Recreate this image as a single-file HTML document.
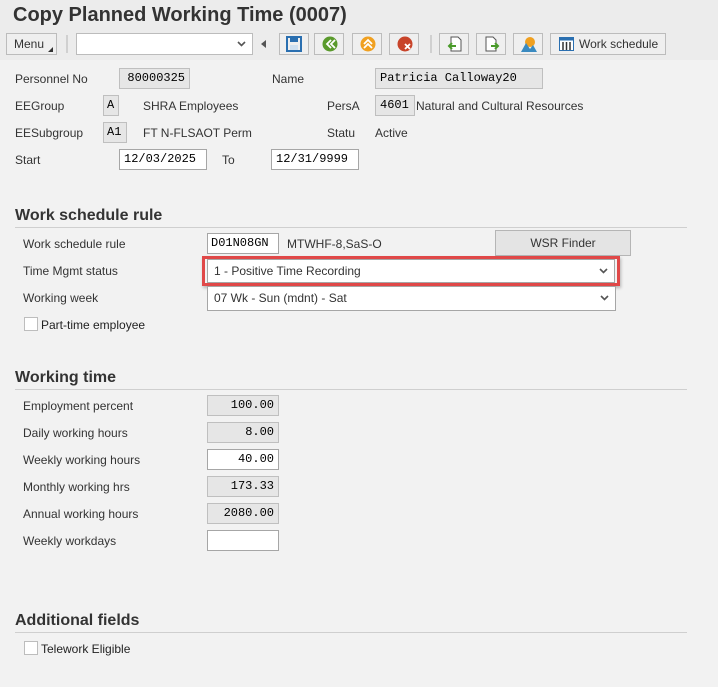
<!DOCTYPE html>
<html><head><style>
*{margin:0;padding:0;box-sizing:border-box}
body{width:718px;height:687px;background:#f2f2f2;font-family:"Liberation Sans",Arial,sans-serif;font-size:12px;color:#333;position:relative;overflow:hidden}
.a{position:absolute}
.t{position:absolute;font-size:12px;color:#333;line-height:14px}
.box{position:absolute;border:1px solid #bfbfbf;background:#e6e6e6;font-family:"Liberation Mono",monospace;font-size:12px;line-height:19px;padding:0 4px;color:#000}
.w{background:#fff;border-color:#a6a6a6}
.r{text-align:right}
.btn{position:absolute;top:33px;height:22px;border:1px solid #bcbcbc;background:#efefef}
.h{position:absolute;left:15px;font-size:16px;font-weight:bold;color:#333}
.line{position:absolute;left:15px;width:672px;height:1px;background:#cfcfcf}
.cb{position:absolute;width:14px;height:14px;border:1px solid #bdbdbd;background:#fff}
</style></head><body>
<div class="a" style="left:0;top:0;width:718px;height:60px;background:#ececec"></div>
<div class="a" style="left:13px;top:4px;font-size:20px;font-weight:bold;color:#333">Copy Planned Working Time (0007)</div>
<div class="btn" style="left:6px;width:51px;font-size:12px;line-height:20px;padding-left:7px">Menu<span style="position:absolute;right:3px;bottom:2px;width:0;height:0;border-left:5px solid transparent;border-bottom:5px solid #333"></span></div>
<div class="a" style="left:66px;top:35px;width:2px;height:18px;background:#d0d0d0"></div>
<div class="a" style="left:76px;top:33px;width:177px;height:22px;background:#fff;border:1px solid #bcbcbc"><svg class="a" style="right:6px;top:7px" width="9" height="6"><path d="M1 1L4.5 4.5L8 1" stroke="#555" stroke-width="1.6" fill="none"/></svg></div>
<svg class="a" style="left:261px;top:40px" width="6" height="8"><path d="M5 0L0 4L5 8Z" fill="#555"/></svg>
<div class="btn" style="left:279px;width:30px"><svg class="a" style="left:6px;top:2px" width="16" height="16"><rect x="1" y="1" width="14" height="14" fill="none" stroke="#2a6fb0" stroke-width="2"/><rect x="4" y="1" width="8" height="5" fill="#2a6fb0"/><rect x="4" y="9" width="8" height="5" fill="#cfe0f0"/></svg></div>
<div class="btn" style="left:314px;width:30px"><svg class="a" style="left:7px;top:2px" width="16" height="16"><circle cx="8" cy="8" r="7.5" fill="#5a9a2c"/><path d="M9 4L5 8L9 12M13 4L9 8L13 12" stroke="#fff" stroke-width="1.8" fill="none"/></svg></div>
<div class="btn" style="left:352px;width:30px"><svg class="a" style="left:7px;top:2px" width="16" height="16"><circle cx="8" cy="8" r="7.5" fill="#f0a020"/><path d="M4 8L8 4L12 8M4 12L8 8L12 12" stroke="#fff" stroke-width="1.8" fill="none"/></svg></div>
<div class="btn" style="left:389px;width:30px"><svg class="a" style="left:7px;top:2px" width="16" height="16"><circle cx="8" cy="8" r="7.5" fill="#c8442a"/><path d="M8 8L13 13M13 8L8 13" stroke="#fff" stroke-width="1.8"/></svg></div>
<div class="a" style="left:430px;top:35px;width:2px;height:18px;background:#d0d0d0"></div>
<div class="btn" style="left:439px;width:30px"><svg class="a" style="left:7px;top:2px" width="16" height="16"><path d="M4 1H11L14 4V15H4Z" fill="#fff" stroke="#555"/><path d="M9 10H2M5 7L2 10L5 13" stroke="#4a9a2a" stroke-width="2" fill="none"/></svg></div>
<div class="btn" style="left:476px;width:30px"><svg class="a" style="left:7px;top:2px" width="16" height="16"><path d="M2 1H9L12 4V15H2Z" fill="#fff" stroke="#555"/><path d="M7 10H14M11 7L14 10L11 13" stroke="#4a9a2a" stroke-width="2" fill="none"/></svg></div>
<div class="btn" style="left:513px;width:30px"><svg class="a" style="left:7px;top:2px" width="16" height="16"><circle cx="9" cy="6" r="5" fill="#f0a020"/><path d="M0 16L5 7L9 13L12 9L16 16Z" fill="#3a8ac0"/></svg></div>
<div class="btn" style="left:550px;width:116px;line-height:20px;padding-left:28px;font-size:12px">Work schedule<svg class="a" style="left:8px;top:3px" width="15" height="14"><rect x="0.5" y="0.5" width="14" height="13" fill="#fff" stroke="#2a6fb0"/><rect x="0.5" y="0.5" width="14" height="3" fill="#2a6fb0"/><path d="M4 5V13M7.5 5V13M11 5V13" stroke="#333" stroke-width="1.5"/></svg></div>

<div class="t" style="left:15px;top:72px">Personnel No</div>
<div class="box r" style="left:119px;top:68px;width:71px;height:21px">80000325</div>
<div class="t" style="left:272px;top:72px">Name</div>
<div class="box" style="left:375px;top:68px;width:168px;height:21px">Patricia Calloway20</div>
<div class="t" style="left:15px;top:99px">EEGroup</div>
<div class="box" style="left:103px;top:95px;width:16px;height:21px;padding:0 3px">A</div>
<div class="t" style="left:143px;top:99px">SHRA Employees</div>
<div class="t" style="left:327px;top:99px">PersA</div>
<div class="box" style="left:375px;top:95px;width:40px;height:21px">4601</div>
<div class="t" style="left:416px;top:99px">Natural and Cultural Resources</div>
<div class="t" style="left:15px;top:126px">EESubgroup</div>
<div class="box" style="left:103px;top:122px;width:24px;height:21px;padding:0 3px">A1</div>
<div class="t" style="left:143px;top:126px">FT N-FLSAOT Perm</div>
<div class="t" style="left:327px;top:126px">Statu</div>
<div class="t" style="left:375px;top:126px">Active</div>
<div class="t" style="left:15px;top:153px">Start</div>
<div class="box w" style="left:119px;top:149px;width:88px;height:21px">12/03/2025</div>
<div class="t" style="left:222px;top:153px">To</div>
<div class="box w" style="left:271px;top:149px;width:88px;height:21px">12/31/9999</div>

<div class="h" style="top:207px">Work schedule rule</div>
<div class="line" style="top:227px"></div>
<div class="t" style="left:23px;top:237px">Work schedule rule</div>
<div class="box w" style="left:207px;top:233px;width:72px;height:21px;padding:0 3px">D01N08GN</div>
<div class="t" style="left:287px;top:237px">MTWHF-8,SaS-O</div>
<div class="a" style="left:495px;top:230px;width:136px;height:26px;border:1px solid #b5b5b5;background:#e4e4e4;text-align:center;line-height:24px;font-size:12px">WSR Finder</div>
<div class="t" style="left:23px;top:264px">Time Mgmt status</div>
<div class="a" style="left:207px;top:259px;width:408px;height:24px;background:#fff;border:1px solid #a6a6a6;line-height:22px;padding-left:6px">1 - Positive Time Recording<svg class="a" style="right:6px;top:8px" width="9" height="6"><path d="M1 1L4.5 4.5L8 1" stroke="#555" stroke-width="1.6" fill="none"/></svg></div>
<div class="a" style="left:202px;top:256px;width:418px;height:30px;border:3px solid #e04848;box-shadow:1px 2px 3px rgba(0,0,0,.25)"></div>
<div class="t" style="left:23px;top:291px">Working week</div>
<div class="a" style="left:207px;top:286px;width:409px;height:25px;background:#fff;border:1px solid #a6a6a6;line-height:22px;padding-left:6px">07 Wk - Sun (mdnt) - Sat<svg class="a" style="right:6px;top:8px" width="9" height="6"><path d="M1 1L4.5 4.5L8 1" stroke="#555" stroke-width="1.6" fill="none"/></svg></div>
<div class="cb" style="left:24px;top:317px"></div>
<div class="t" style="left:41px;top:318px;color:#222">Part-time employee</div>

<div class="h" style="top:369px">Working time</div>
<div class="line" style="top:389px"></div>
<div class="t" style="left:23px;top:399px">Employment percent</div>
<div class="box r" style="left:207px;top:395px;width:72px;height:21px">100.00</div>
<div class="t" style="left:23px;top:426px">Daily working hours</div>
<div class="box r" style="left:207px;top:422px;width:72px;height:21px">8.00</div>
<div class="t" style="left:23px;top:453px">Weekly working hours</div>
<div class="box r w" style="left:207px;top:449px;width:72px;height:21px">40.00</div>
<div class="t" style="left:23px;top:480px">Monthly working hrs</div>
<div class="box r" style="left:207px;top:476px;width:72px;height:21px">173.33</div>
<div class="t" style="left:23px;top:507px">Annual working hours</div>
<div class="box r" style="left:207px;top:503px;width:72px;height:21px">2080.00</div>
<div class="t" style="left:23px;top:534px">Weekly workdays</div>
<div class="box w" style="left:207px;top:530px;width:72px;height:21px"></div>

<div class="h" style="top:612px">Additional fields</div>
<div class="line" style="top:632px"></div>
<div class="cb" style="left:24px;top:641px"></div>
<div class="t" style="left:41px;top:642px;color:#222">Telework Eligible</div>
</body></html>
